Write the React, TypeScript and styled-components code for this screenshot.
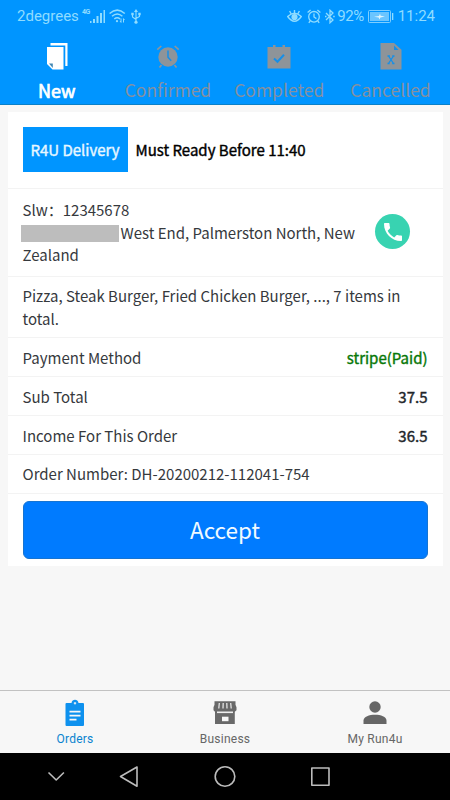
import React from "react";
import styled, { createGlobalStyle } from "styled-components";

const GlobalStyle = createGlobalStyle`
  * { box-sizing: border-box; }
  body { margin: 0; background: #f7f7f7; }
  svg { display: block; flex: none; }
`;

const sans = `"Noto Sans CJK SC", "Noto Sans", sans-serif`;

const Screen = styled.div`
  width: 450px;
  height: 800px;
  display: flex;
  flex-direction: column;
  overflow: hidden;
  background: #f7f7f7;
  color: #36393d;
  font-family: ${sans};
`;

const Header = styled.header`
  height: 105px;
  flex: none;
  background: #0095ff;
  border-bottom: 1px solid #0a80c8;
`;

const StatusBar = styled.div`
  height: 32px;
  padding: 0 15px 0 17px;
  display: flex;
  align-items: center;
  justify-content: space-between;
  color: #8fdcff;
  font: 400 15px/32px Roboto, sans-serif;
`;

const StatusGroup = styled.div`
  display: flex;
  align-items: center;
`;

const StatusText = styled.span<{ $spacing?: number }>`
  letter-spacing: ${(p) => p.$spacing ?? 0}px;
`;

const Gap = styled.span<{ $w: number }>`
  width: ${(p) => p.$w}px;
`;

const Network = styled.span`
  align-self: flex-start;
  margin: 7px 0 0 3px;
  font: 700 7px/10px Roboto, sans-serif;
  letter-spacing: -0.5px;
`;

const TopTabs = styled.nav`
  display: grid;
  grid-template-columns: repeat(4, 111.3px);
  padding-left: 1px;
`;

const TopTab = styled.div<{ $active?: boolean }>`
  height: 72px;
  padding-top: 9px;
  display: flex;
  flex-direction: column;
  align-items: center;
  color: ${(p) => (p.$active ? "#fff" : "#8490a0")};
  font-size: ${(p) => (p.$active ? 18 : 17.5)}px;
  font-weight: 400;
  line-height: 24px;
  -webkit-text-stroke: ${(p) => (p.$active ? "0.7px #fff" : "0")};
  white-space: nowrap;

  svg {
    margin-bottom: 3px;
    color: #8e9499;
  }
`;

const Card = styled.main`
  margin: 7px 7.5px 0;
  height: 454px;
  flex: none;
  background: #fff;
  font-size: 15px;
  line-height: 22.5px;
  font-weight: 400;
`;

const Row = styled.section<{ $h: number }>`
  height: ${(p) => p.$h}px;
  padding: 1.5px 15px 0;
  display: flex;
  align-items: center;
  justify-content: space-between;
  border-bottom: 1px solid #f3f3f3;
  white-space: nowrap;
`;

const ReadyRow = styled(Row)`
  padding-top: 0;
  justify-content: flex-start;
  gap: 8px;
`;

const DeliveryTag = styled.span`
  width: 105px;
  height: 45px;
  display: flex;
  align-items: center;
  justify-content: center;
  background: #0095ff;
  color: #e8f7ff;
  -webkit-text-stroke: 0.4px #e8f7ff;
`;

const ReadyText = styled.span`
  color: #000;
  -webkit-text-stroke: 0.4px #000;
`;

const Redacted = styled.span`
  display: inline-block;
  width: 98px;
  height: 17px;
  margin: 0 2px 0 -2px;
  vertical-align: -3px;
  background: #bdbdbd;
`;

const CallButton = styled.button`
  width: 35px;
  height: 35px;
  margin: 0 17.5px 3px 0;
  padding: 0;
  border: 0;
  border-radius: 50%;
  display: flex;
  align-items: center;
  justify-content: center;
  background: #38d3b1;
`;

const Value = styled.span<{ $paid?: boolean }>`
  color: ${(p) => (p.$paid ? "#087808" : "#212529")};
  -webkit-text-stroke: 0.4px currentColor;
`;

const Accept = styled.button`
  display: block;
  width: 405px;
  height: 58px;
  margin: 7.5px auto 0;
  padding: 0 0 2px;
  border: 1px solid #1674d2;
  border-radius: 6px;
  background: #007bff;
  color: #f0faff;
  font: 400 22.5px/52px ${sans};
`;

const BottomTabs = styled.nav`
  height: 63px;
  margin-top: auto;
  flex: none;
  display: grid;
  grid-template-columns: repeat(3, 1fr);
  border-top: 1px solid #c2c2c2;
`;

const BottomTab = styled.div<{ $active?: boolean }>`
  padding-top: 7px;
  display: flex;
  flex-direction: column;
  align-items: center;
  gap: 3px;
  color: ${(p) => (p.$active ? "#0b83cf" : "#666")};
  font: 400 12px/16px Roboto, sans-serif;
  letter-spacing: 0.25px;
`;

const SystemNav = styled.footer`
  height: 47px;
  flex: none;
  background: #000;
`;

const SignalIcon = () => (
  <svg width="16" height="13" viewBox="0 0 16 13" fill="currentColor">
    <path d="M0 11h1.5v2H0zM3 9h2v4H3zM6.5 6h2v7h-2zM10 3h2v10h-2zM13.5 0h1.5v13h-1.5z" />
  </svg>
);

const WifiIcon = () => (
  <svg width="17" height="14" viewBox="0 0 17 14" fill="none" stroke="currentColor" strokeWidth="1.5">
    <path d="M.6 4.5Q8.2-2.2 15.8 4.5M3 7.3q5.2-4.6 10.4 0M5.3 10q2.9-2.5 5.8 0" />
    <circle cx="8" cy="12.2" r="1.1" fill="currentColor" stroke="none" />
    <path strokeWidth="1" d="M12 9.5v4M14.5 9.5v4M11 12l1 1.3M15.5 11l-1-1.2" />
  </svg>
);

const UsbIcon = () => (
  <svg width="10" height="15" viewBox="0 0 10 15" fill="none" stroke="currentColor" strokeWidth="1.1">
    <path d="M5 2v11M1.5 5v3L5 10.5M8.5 5v2.5L5 9.5" />
    <path d="M5 0l2 3H3zM.3 3.8h2.4v2.4H.3zM7.3 3.8h2.4v2.4H7.3z" fill="currentColor" stroke="none" />
    <circle cx="5" cy="13.2" r="1.6" fill="currentColor" stroke="none" />
  </svg>
);

const EyeIcon = () => (
  <svg width="15" height="14" viewBox="0 0 15 14" fill="none" stroke="currentColor" strokeWidth="1.4">
    <path d="M.7 7.5Q7.5.8 14.3 7.5 7.5 17 .7 7.5zM7.5 4V1M4 4.5L2.6 2M11 4.5L12.4 2" />
    <circle cx="7.5" cy="8" r="2.4" fill="currentColor" />
  </svg>
);

const AlarmOutline = () => (
  <svg width="14" height="15" viewBox="0 0 14 15" fill="none" stroke="currentColor" strokeWidth="1.3">
    <circle cx="7" cy="7.8" r="5.3" />
    <path d="M7 4.5V8l2.4 1.6M.6 3.5L3.6 1M13.4 3.5L10.4 1M3.2 12l-1.4 1.8M10.8 12l1.4 1.8" />
  </svg>
);

const BluetoothIcon = () => (
  <svg width="10" height="15" viewBox="0 0 10 15" fill="none" stroke="currentColor" strokeWidth="1.3">
    <path d="M1 4l7 7-3 2.8V1.2L8 4l-7 7" />
    <path d="M0 7.5h1.5M8.2 7.5h1.5" />
  </svg>
);

const BatteryIcon = () => (
  <svg width="26" height="13" viewBox="0 0 26 13">
    <rect x=".5" y=".5" width="22" height="12" rx="1" fill="none" stroke="#7fceff" />
    <rect x="2" y="2" width="19" height="9" fill="#6bc5ff" />
    <path d="M6 6.7l5-.8 1-2.2.6 2L17 6.6l-4.6.8-1 2.2-.7-2.2z" fill="#e0f6ff" />
    <path d="M24 3h1.3v7H24z" fill="#8fdcff" />
  </svg>
);

const PagesIcon = () => (
  <svg width="30" height="34" viewBox="0 0 30 34" fill="#fff">
    <path d="M8.5 2H25.5v23h-2.2V4.5H8.5z" />
    <path d="M5 6h16.500v22.500H10.500L5 23z" />
    <path d="M7 22.500h3.800v4.500" fill="#4388b4" />
  </svg>
);

const AlarmIcon = () => (
  <svg width="30" height="34" viewBox="0 0 30 34">
    <circle cx="15" cy="16" r="9.7" fill="currentColor" />
    <path d="M4.3 8.7L8.3 5M25.7 8.7L21.7 5M8.5 24l-2 2.5M21.5 24l2 2.5" fill="none" stroke="currentColor" strokeWidth="1.7" />
    <path d="M15 9.5v6.8l3.2 3.4" fill="none" stroke="#168fe8" strokeWidth="1.5" />
  </svg>
);

const CalendarCheckIcon = () => (
  <svg width="30" height="34" viewBox="0 0 30 34">
    <path d="M3.5 6H9V4h2.5v2h7V4H21v2h5.5v21.5h-23z" fill="currentColor" />
    <path d="M10 17.5l3.5 3.3 6.5-7" fill="none" stroke="#168fe8" strokeWidth="2" />
  </svg>
);

const FileXIcon = () => (
  <svg width="30" height="34" viewBox="0 0 30 34">
    <path d="M4.5 2H18l7.500 6.700V28.500h-21z" fill="currentColor" />
    <path d="M18 4.5v4.5h4.6z" fill="#168fe8" />
    <path d="M12.5 15l5 7.5M17.5 15l-5 7.5M11.5 15h2.4M16.2 15h2.3M11.5 22.500h2.200M16.200 22.500h2.300" fill="none" stroke="#168fe8" strokeWidth="1.3" />
  </svg>
);

const PhoneIcon = () => (
  <svg width="24" height="24" viewBox="0 0 24 24" fill="#fff">
    <path d="M6.62 10.79c1.44 2.83 3.76 5.14 6.59 6.59l2.2-2.2c.27-.27.67-.36 1.02-.24 1.12.37 2.33.57 3.57.57.55 0 1 .45 1 1V20c0 .55-.45 1-1 1C10.61 21 3 13.39 3 4c0-.55.45-1 1-1h3.5c.55 0 1 .45 1 1 0 1.25.2 2.45.57 3.57.11.35.03.74-.25 1.02z" />
  </svg>
);

const ClipboardIcon = () => (
  <svg width="26" height="30" viewBox="0 0 26 30">
    <path d="M4.500 5H9.500C10 .8 16 .8 16.500 5h4.500a1 1 0 0 1 1 1v21a1 1 0 0 1-1 1h-16.500a1 1 0 0 1-1-1V6a1 1 0 0 1 1-1z" fill="#0e91ee" />
    <path d="M13 4v2.500M11.800 5.200h2.400" stroke="#f7f7f7" strokeWidth="1" />
    <path d="M7.500 13.700h11M7.500 17.700h11M7.500 21.700h7" stroke="#f7f7f7" strokeWidth="1.7" />
  </svg>
);

const StoreIcon = () => (
  <svg width="26" height="30" viewBox="0 0 26 30">
    <path d="M2.500 3.300h21v3.500l1 2.500v3l-1.700 1.500V26H3V13.800L1.500 12.300v-3l1-2.500z" fill="#696969" />
    <path d="M7.300 5l-.5 5.500M11.200 5l-.2 5.500M14.800 5l.2 5.500M18.700 5l.5 5.500" stroke="#eee" strokeWidth="1.200" />
    <path d="M5 14.300h16" stroke="#eee" strokeWidth="1.600" />
    <path d="M10 18.700h6.500v4.500H10z" fill="#f7f7f7" />
  </svg>
);

const PersonIcon = () => (
  <svg width="26" height="30" viewBox="0 0 26 30" fill="#666">
    <circle cx="13" cy="9" r="5.7" />
    <path d="M1.500 26v-3.500C1.500 14.800 24.500 14.800 24.500 22.500V26z" />
  </svg>
);

const SystemIcons = () => (
  <svg width="450" height="47" viewBox="0 0 450 47" fill="none" stroke="#bcbcbc" strokeWidth="1.6" strokeLinejoin="round">
    <path d="M48.5 19.5l7.700 7.500 7.700-7.500" />
    <path d="M137 14v19.300L120.500 23.500z" />
    <circle cx="225" cy="23.500" r="9.800" />
    <rect x="311.800" y="15" width="17.200" height="17.200" />
  </svg>
);

export default function App() {
  return (
    <>
      <GlobalStyle />
      <Screen>
        <Header>
          <StatusBar>
            <StatusGroup>
              <StatusText>2degrees</StatusText>
              <Network>4G</Network>
              <SignalIcon />
              <Gap $w={3} />
              <WifiIcon />
              <Gap $w={5} />
              <UsbIcon />
            </StatusGroup>
            <StatusGroup>
              <EyeIcon />
              <Gap $w={5} />
              <AlarmOutline />
              <Gap $w={4} />
              <BluetoothIcon />
              <Gap $w={2} />
              <StatusText $spacing={-0.5}>92%</StatusText>
              <Gap $w={4} />
              <BatteryIcon />
              <Gap $w={4} />
              <StatusText>11:24</StatusText>
            </StatusGroup>
          </StatusBar>
          <TopTabs>
            <TopTab $active><PagesIcon />New</TopTab>
            <TopTab><AlarmIcon />Confirmed</TopTab>
            <TopTab><CalendarCheckIcon />Completed</TopTab>
            <TopTab><FileXIcon />Cancelled</TopTab>
          </TopTabs>
        </Header>
        <Card>
          <ReadyRow $h={76.5}>
            <DeliveryTag>R4U Delivery</DeliveryTag>
            <ReadyText>Must Ready Before 11:40</ReadyText>
          </ReadyRow>
          <Row $h={88.5}>
            <div>
              Slw：12345678<br />
              <Redacted />West End, Palmerston North, New<br />
              Zealand
            </div>
            <CallButton aria-label="Call"><PhoneIcon /></CallButton>
          </Row>
          <Row $h={61}>
            <div>Pizza, Steak Burger, Fried Chicken Burger, ..., 7 items in<br />total.</div>
          </Row>
          <Row $h={39}><span>Payment Method</span><Value $paid>stripe(Paid)</Value></Row>
          <Row $h={39}><span>Sub Total</span><Value>37.5</Value></Row>
          <Row $h={39}><span>Income For This Order</span><Value>36.5</Value></Row>
          <Row $h={38.5}><span>Order Number: DH-20200212-112041-754</span></Row>
          <Accept>Accept</Accept>
        </Card>
        <BottomTabs>
          <BottomTab $active><ClipboardIcon />Orders</BottomTab>
          <BottomTab><StoreIcon />Business</BottomTab>
          <BottomTab><PersonIcon />My Run4u</BottomTab>
        </BottomTabs>
        <SystemNav><SystemIcons /></SystemNav>
      </Screen>
    </>
  );
}
